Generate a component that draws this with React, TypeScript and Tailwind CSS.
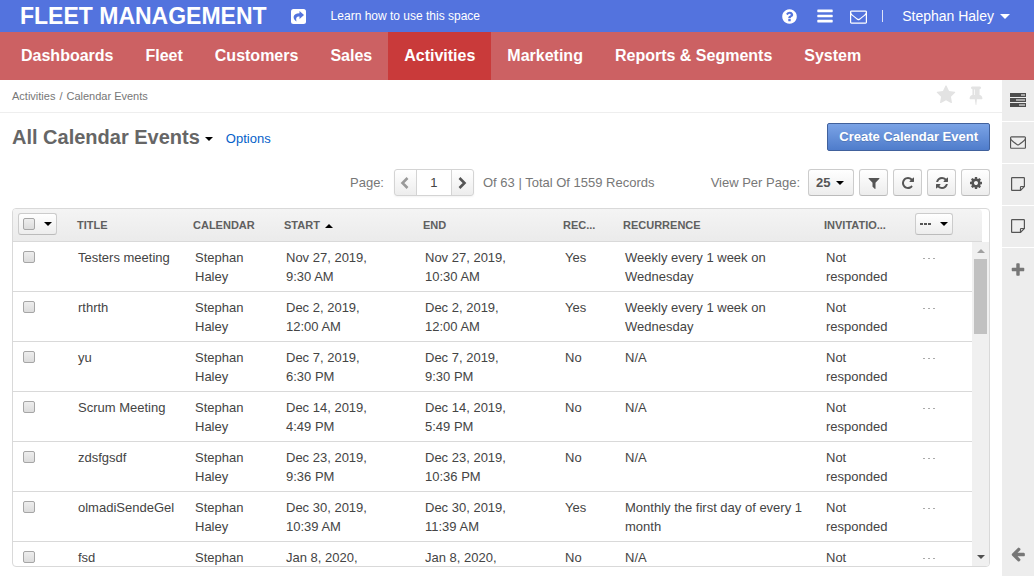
import React from "react";

const ICONS = {
  question:
    "M1024 1376v-192q0-14-9-23t-23-9h-192q-14 0-23 9t-9 23v192q0 14 9 23t23 9h192q14 0 23-9t9-23zm256-672q0-88-55.500-163t-138.500-116-170-41q-243 0-371 213-15 24 8 42l132 100q7 6 19 6 16 0 25-12 53-68 86-92 34-24 86-24 48 0 85.500 26t37.500 59q0 38-20 61t-68 45q-63 28-115.500 86.500t-52.500 125.500v36q0 14 9 23t23 9h192q14 0 23-9t9-23q0-19 21.500-49.500t54.500-49.500q32-18 49-28.500t46-35 44.500-48 28-60.500 12.500-81zm384 192q0 209-103 385.500t-279.500 279.500-385.500 103-385.500-103-279.500-279.500-103-385.500 103-385.500 279.500-279.500 385.500-103 385.500 103 279.500 279.500 103 385.500z",
  bars: "M1664 1344v128q0 26-19 45t-45 19h-1408q-26 0-45-19t-19-45v-128q0-26 19-45t45-19h1408q26 0 45 19t19 45zm0-512v128q0 26-19 45t-45 19h-1408q-26 0-45-19t-19-45v-128q0-26 19-45t45-19h1408q26 0 45 19t19 45zm0-512v128q0 26-19 45t-45 19h-1408q-26 0-45-19t-19-45v-128q0-26 19-45t45-19h1408q26 0 45 19t19 45z",
  envelope:
    "M1664 1504v-768q-32 36-69 66-268 206-426 338-51 43-83 67t-86.500 48.500-102.500 24.500h-2q-48 0-102.500-24.500t-86.500-48.500-83-67q-158-132-426-338-37-30-69-66v768q0 13 9.500 22.500t22.500 9.500h1472q13 0 22.500-9.500t9.500-22.500zm0-1051v-24.500l-.5-13-3-12.500-5.500-9-9-7.500-14-2.500h-1472q-13 0-22.500 9.500t-9.500 22.500q0 168 147 284 193 152 401 317 6 5 35 29.500t46 37.500 44.500 31.500 50.500 27.500 43 9h2q20 0 43-9t50.500-27.500 44.500-31.500 46-37.500 35-29.500q208-165 401-317 54-43 100.500-115.500t46.500-131.500zm128-37v1088q0 66-47 113t-113 47h-1472q-66 0-113-47t-47-113v-1088q0-66 47-113t113-47h1472q66 0 113 47t47 113z",
  star: "M1728 647q0 22-26 48l-363 354 86 500q1 7 1 20 0 21-10.500 35.500t-30.500 14.500q-19 0-40-12l-449-236-449 236q-22 12-40 12-21 0-31.500-14.500t-10.500-35.500q0-6 2-20l86-500-364-354q-25-27-25-48 0-37 56-46l502-73 225-455q19-41 49-41t49 41l225 455 502 73q56 9 56 46z",
  pin: "M800 864v-448q0-14-9-23t-23-9-23 9-9 23v448q0 14 9 23t23 9 23-9 9-23zm672 352q0 26-19 45t-45 19h-429l-51 483q-2 12-10.500 20.500t-20.500 8.500h-1q-27 0-32-27l-76-485h-404q-26 0-45-19t-19-45q0-123 78.500-221.500t177.500-98.500v-512q-52 0-90-38t-38-90 38-90 90-38h640q52 0 90 38t38 90-38 90-90 38v512q99 0 177.500 98.500t78.500 221.500z",
  filter:
    "M1595 295q17 41-14 70l-493 493v742q0 42-39 59-13 5-25 5-27 0-45-19l-256-256q-19-19-19-45v-486l-493-493q-31-29-14-70 17-39 59-39h1280q42 0 59 39z",
  repeat:
    "M1664 256v448q0 26-19 45t-45 19h-448q-42 0-59-40-17-39 14-69l138-138q-148-137-349-137-104 0-198.500 40.500t-163.500 109.500-109.500 163.500-40.500 198.500 40.500 198.500 109.500 163.500 163.500 109.500 198.500 40.500q119 0 225-52t179-147q7-10 23-12 15 0 25 9l137 138q9 8 9.500 20.500t-7.500 22.500q-109 132-264 204.500t-327 72.500q-156 0-298-61t-245-164-164-245-61-298 61-298 164-245 245-164 298-61q147 0 284.500 55.500t244.500 156.500l130-129q29-31 70-14 39 17 39 59z",
  refresh:
    "M1639 1056q0 5-1 7-64 268-268 434.500t-478 166.500q-146 0-282.500-55t-243.500-157l-129 129q-19 19-45 19t-45-19-19-45v-448q0-26 19-45t45-19h448q26 0 45 19t19 45-19 45l-137 137q71 66 161 102t187 36q134 0 250-65t186-179q11-17 53-117 8-23 30-23h192q13 0 22.500 9.500t9.500 22.500zm25-800v448q0 26-19 45t-45 19h-448q-26 0-45-19t-19-45 19-45l138-138q-148-137-349-137-134 0-250 65t-186 179q-11 17-53 117-8 23-30 23h-199q-13 0-22.500-9.500t-9.500-22.500v-7q65-268 270-434.500t480-166.500q146 0 284 55.500t245 156.500l130-129q19-19 45-19t45 19 19 45z",
  cog: "M1152 896q0-106-75-181t-181-75-181 75-75 181 75 181 181 75 181-75 75-181zm512-109v222q0 12-8 23t-20 13l-185 28q-19 54-39 91 35 50 107 138 10 12 10 25t-9 23q-27 37-99 108t-94 71q-12 0-26-9l-138-108q-44 23-91 38-16 136-29 186-7 28-36 28h-222q-14 0-24.500-8.500t-11.500-21.500l-28-184q-49-16-90-37l-141 107q-10 9-25 9-14 0-25-11-126-114-165-168-7-10-7-23 0-12 8-23 15-21 51-66.500t54-70.500q-27-50-41-99l-183-27q-13-2-21-12.500t-8-23.500v-222q0-12 8-23t19-13l186-28q14-46 39-92-40-57-107-138-10-12-10-24 0-10 9-23 26-36 98.500-107.500t94.500-71.500q13 0 26 10l138 107q44-23 91-38 16-136 29-186 7-28 36-28h222q14 0 24.500 8.500t11.500 21.500l28 184q49 16 90 37l142-107q9-9 24-9 13 0 25 10 129 119 165 170 7 8 7 22 0 12-8 23-15 21-51 66.500t-54 70.500q26 50 41 98l183 28q13 2 21 12.500t8 23.500z",
  plus: "M1600 736v192q0 40-28 68t-68 28h-416v416q0 40-28 68t-68 28h-192q-40 0-68-28t-28-68v-416h-416q-40 0-68-28t-28-68v-192q0-40 28-68t68-28h416v-416q0-40 28-68t68-28h192q40 0 68 28t28 68v416h416q40 0 68 28t28 68z",
  arrowLeft:
    "M1664 896v128q0 53-32.500 90.500t-84.500 37.500h-704l293 294q38 36 38 90t-38 90l-75 76q-37 37-90 37-52 0-91-37l-651-652q-37-37-37-90 0-52 37-91l651-650q38-38 91-38 52 0 90 38l75 74q38 38 38 91t-38 91l-293 293h704q52 0 84.500 37.500t32.500 90.500z",
};

function Icon({ name, className }: { name: keyof typeof ICONS; className: string }) {
  return (
    <svg viewBox="0 0 1792 1792" className={className} fill="currentColor" aria-hidden="true">
      <path d={ICONS[name]} />
    </svg>
  );
}

function Caret({ className = "w-2", up = false }: { className?: string; up?: boolean }) {
  return (
    <svg viewBox="0 0 8 4" className={className} fill="currentColor" aria-hidden="true">
      <path d={up ? "M0 4h8L4 0z" : "M0 0h8L4 4z"} />
    </svg>
  );
}

function Chevron({ left = false }: { left?: boolean }) {
  return (
    <svg viewBox="0 0 10 12" className="h-3 w-[10px]" fill="none" stroke="currentColor" strokeWidth="2.600" aria-hidden="true">
      <path d={left ? "M7.500 1 2.500 6l5 5" : "M2.500 1l5 5-5 5"} />
    </svg>
  );
}

function ShareIcon() {
  return (
    <svg viewBox="0 0 15 15" className="size-[15px]" aria-hidden="true">
      <rect width="15" height="15" rx="2.500" fill="#fff" />
      <path d="M8.500 2 13 6 8.500 10V7.600C5.800 7.500 4.500 8.800 5.600 12.600 1.300 10.500 1.200 4.300 8.500 4.300z" fill="#5373de" />
    </svg>
  );
}

function TasksIcon() {
  return (
    <svg viewBox="0 0 16 14" className="h-[14px] w-4" aria-hidden="true">
      <path d="M0 0h16v4H0zM0 5h16v4H0zM0 10h16v4H0z" fill="#4d4d4d" />
      <path d="M11 1.500h4v1h-4zM6 6.500h9v1H6zM9 11.500h6v1H9z" fill="#fff" />
    </svg>
  );
}

function NoteIcon() {
  return (
    <svg viewBox="0 0 14 14" className="size-[14px]" fill="none" stroke="#555" strokeWidth="1.200" aria-hidden="true">
      <path d="M1.300.6h11.400q.7 0 .7.700v8.200l-3.900 3.900H1.300q-.7 0-.7-.7V1.300q0-.7.7-.7z" />
      <path d="M13.400 9.500h-3.200q-.7 0-.7.700v3.200" />
    </svg>
  );
}

const NAV = ["Dashboards", "Fleet", "Customers", "Sales", "Activities", "Marketing", "Reports & Segments", "System"];

type Row = { title: string; start: string; end: string; recurrent: string; recurrence: string };

const ROWS: Row[] = [
  { title: "Testers meeting", start: "Nov 27, 2019, 9:30 AM", end: "Nov 27, 2019, 10:30 AM", recurrent: "Yes", recurrence: "Weekly every 1 week on Wednesday" },
  { title: "rthrth", start: "Dec 2, 2019, 12:00 AM", end: "Dec 2, 2019, 12:00 AM", recurrent: "Yes", recurrence: "Weekly every 1 week on Wednesday" },
  { title: "yu", start: "Dec 7, 2019, 6:30 PM", end: "Dec 7, 2019, 9:30 PM", recurrent: "No", recurrence: "N/A" },
  { title: "Scrum Meeting", start: "Dec 14, 2019, 4:49 PM", end: "Dec 14, 2019, 5:49 PM", recurrent: "No", recurrence: "N/A" },
  { title: "zdsfgsdf", start: "Dec 23, 2019, 9:36 PM", end: "Dec 23, 2019, 10:36 PM", recurrent: "No", recurrence: "N/A" },
  { title: "olmadiSendeGel", start: "Dec 30, 2019, 10:39 AM", end: "Dec 30, 2019, 11:39 AM", recurrent: "Yes", recurrence: "Monthly the first day of every 1 month" },
  { title: "fsd", start: "Jan 8, 2020, 10:00 AM", end: "Jan 8, 2020, 11:00 AM", recurrent: "No", recurrence: "N/A" },
];

const COLS =
  "grid grid-cols-[59px_minmax(0,116fr)_minmax(0,91fr)_minmax(0,139fr)_minmax(0,140fr)_minmax(0,60fr)_minmax(0,201fr)_minmax(0,90fr)_63px]";
const BUTTON = "rounded-[3px] border border-[#ccc] border-b-[#bbb] bg-linear-to-b from-white to-[#ededed] text-[#555]";
const CHECKBOX =
  "block size-3 appearance-none rounded-[2px] border border-[#a6a6a6] bg-linear-to-b from-[#eee] to-[#dcdcdc] checked:bg-[#555]";
const HEAD = "truncate pl-[5px] text-left font-bold";
const CELL = "pl-[7px] pr-2";

function TopBar() {
  return (
    <header className="flex h-8 shrink-0 items-center bg-[#5373de] pr-6 pl-5 text-white">
      <div className="text-[23px] leading-8 font-bold">FLEET MANAGEMENT</div>
      <a href="#share" aria-label="Share" className="ml-6">
        <ShareIcon />
      </a>
      <a href="#learn" className="ml-[25px] text-xs">Learn how to use this space</a>
      <div className="ml-auto flex items-center">
        <a href="#help" aria-label="Help"><Icon name="question" className="size-[17px]" /></a>
        <button aria-label="Menu" className="ml-[18px]"><Icon name="bars" className="size-[18px]" /></button>
        <a href="#mail" aria-label="Emails" className="ml-4"><Icon name="envelope" className="size-[17px]" /></a>
        <span className="ml-[15px] h-3 w-px bg-white/80" />
        <button className="ml-[19px] flex items-center gap-[6px] text-sm">
          Stephan Haley
          <Caret className="w-[10px]" />
        </button>
      </div>
    </header>
  );
}

function MainNav() {
  return (
    <nav className="flex h-12 shrink-0 bg-[#cc6163] pl-[5px]">
      {NAV.map((item) => (
        <a
          key={item}
          href={"#" + item}
          className={
            "flex items-center px-4 text-base font-bold text-white " + (item === "Activities" ? "bg-[#c93a3a]" : "")
          }
        >
          {item}
        </a>
      ))}
    </nav>
  );
}

function Toolbar() {
  return (
    <div className="mt-[18px] flex h-[27px] items-center pr-3 pl-[350px] text-[13px] text-[#777]">
      <label htmlFor="page">Page:</label>
      <div className="ml-[10px] flex h-[27px] shrink-0 rounded-[3px] border border-[#d4d4d4] bg-linear-to-b from-white to-[#ededed] shadow-xs">
        <button aria-label="Previous page" className="flex w-[21px] items-center justify-center text-[#999]"><Chevron left /></button>
        <input id="page" defaultValue="1" className="w-9 border-x border-[#d4d4d4] bg-white text-center text-[#444]" />
        <button aria-label="Next page" className="flex w-[21px] items-center justify-center text-[#555]"><Chevron /></button>
      </div>
      <span className="ml-[9px] whitespace-nowrap">Of 63 | Total Of 1559 Records</span>
      <label htmlFor="per-page" className="ml-auto whitespace-nowrap">View Per Page:</label>
      <div className="relative ml-2">
        <select id="per-page" className={"block h-[27px] w-[46px] appearance-none pl-[7px] font-bold " + BUTTON}>
          <option>25</option>
          <option>50</option>
        </select>
        <Caret className="pointer-events-none absolute top-3 right-[10px] w-2 text-black" />
      </div>
      <div className="ml-[5px] flex gap-[5px]">
        {([["filter", "Filter"], ["repeat", "Refresh"], ["refresh", "Reset"], ["cog", "Grid settings"]] as const).map(([icon, label]) => (
          <button key={icon} aria-label={label} className={"flex h-[27px] w-[29px] items-center justify-center " + BUTTON}>
            <Icon name={icon} className="size-[14px]" />
          </button>
        ))}
      </div>
    </div>
  );
}

function EventsGrid() {
  return (
    <div className="relative mx-3 mt-3 mb-[9px] flex min-h-0 flex-1 flex-col overflow-hidden rounded-[4px] border border-[#d9d9d9]">
      <table className="flex min-h-0 flex-1 flex-col text-[13px] leading-[19px] text-[#444]">
        <thead className="mr-[7px] block h-[33px] shrink-0 rounded-tr-[4px] border-b border-[#d9d9d9] bg-linear-to-b from-[#f4f4f4] to-[#ebebeb]">
          <tr className={COLS + " mr-[10px] h-8 items-center pt-px text-[11px] text-[#606060]"}>
            <th className="pb-[3px] pl-[5px]">
              <div className={"flex h-[22px] w-[39px] items-center justify-between pr-1 pl-1 " + BUTTON}>
                <input type="checkbox" aria-label="Select all" className={CHECKBOX} />
                <button aria-label="Selection options" className="text-black"><Caret /></button>
              </div>
            </th>
            <th className={HEAD}>TITLE</th>
            <th className={HEAD}>CALENDAR</th>
            <th className={HEAD}>
              <button className="flex items-center gap-[5px]">START <Caret up className="w-2 text-black" /></button>
            </th>
            <th className={HEAD}>END</th>
            <th className={HEAD}>REC...</th>
            <th className={HEAD}>RECURRENCE</th>
            <th className={HEAD}>INVITATIO...</th>
            <th className="pb-[3px] pl-[6px]">
              <button aria-label="Mass actions" className={"flex h-[22px] w-[38px] items-center justify-between px-1 " + BUTTON}>
                <svg viewBox="0 0 11 2" className="w-[11px]" fill="currentColor" aria-hidden="true">
                  <path d="M0 0h3v2H0zM4 0h3v2H4zM8 0h3v2H8z" />
                </svg>
                <Caret className="w-2 text-black" />
              </button>
            </th>
          </tr>
        </thead>
        <tbody className="mr-[17px] block min-h-0 flex-1 overflow-y-auto [scrollbar-width:none]">
          {ROWS.map((row) => (
            <tr key={row.title} className={COLS + " h-[50px] border-b border-[#d9d9d9] pt-[6px]"}>
              <td className="pt-[3px] pl-[10px]">
                <input type="checkbox" aria-label={"Select " + row.title} className={CHECKBOX} />
              </td>
              <td className="pl-[6px]">{row.title}</td>
              <td className={CELL}>Stephan Haley</td>
              <td className={CELL + " max-w-[110px]"}>{row.start}</td>
              <td className={CELL + " max-w-[110px]"}>{row.end}</td>
              <td className={CELL}>{row.recurrent}</td>
              <td className={CELL}>{row.recurrence}</td>
              <td className={CELL}>Not responded</td>
              <td className="pl-[14px]">
                <button aria-label="Row actions" className="block pt-[10px]">
                  <svg viewBox="0 0 12 1" className="w-3" fill="#aaa" aria-hidden="true">
                    <path d="M0 0h2v1H0zM5 0h2v1H5zM10 0h2v1h-2z" />
                  </svg>
                </button>
              </td>
            </tr>
          ))}
        </tbody>
      </table>
      <div aria-hidden="true" className="absolute top-[33px] right-0 bottom-0 flex w-[17px] flex-col items-center bg-[#f0f0f0]">
        <Caret up className="mt-[7px] w-2 text-[#a0a0a0]" />
        <div className="mt-[6px] h-[75px] w-[13px] bg-[#c1c1c1]" />
        <Caret className="mt-auto mb-[7px] w-2 text-[#505050]" />
      </div>
    </div>
  );
}

function Sidebar() {
  const item = "flex h-[42px] items-center justify-center border-b border-white pb-px";
  return (
    <aside className="flex w-8 shrink-0 flex-col bg-[#ededed] text-[#555]">
      <button aria-label="Tasks" className={item}><TasksIcon /></button>
      <button aria-label="Emails" className={item}><Icon name="envelope" className="size-4" /></button>
      <button aria-label="Note" className={item}><NoteIcon /></button>
      <button aria-label="Note" className={item}><NoteIcon /></button>
      <button aria-label="Add widget" className="flex h-11 items-center justify-center text-[#777]">
        <Icon name="plus" className="size-4" />
      </button>
      <button aria-label="Collapse" className="mt-auto flex h-11 items-center justify-center text-[#777]">
        <Icon name="arrowLeft" className="size-4" />
      </button>
    </aside>
  );
}

export default function App() {
  return (
    <div className="flex h-screen flex-col bg-white font-['Liberation_Sans',Arial,sans-serif]">
      <TopBar />
      <MainNav />
      <div className="flex min-h-0 flex-1">
        <main className="flex min-w-0 flex-1 flex-col">
          <div className="flex h-[33px] shrink-0 items-center border-b border-[#eee] px-3 text-[11px] text-[#777]">
            <a href="#activities">Activities</a>
            <span className="mx-1">/</span>
            <span>Calendar Events</span>
            <div className="ml-auto flex items-center gap-[10px] pr-1 pb-[3px] text-[#e3e3e3]">
              <button aria-label="Favorite"><Icon name="star" className="size-5" /></button>
              <button aria-label="Pin"><Icon name="pin" className="size-5" /></button>
            </div>
          </div>
          <div className="mt-[10px] flex h-7 shrink-0 items-center px-3">
            <h1 className="text-xl font-bold text-[#666]">All Calendar Events</h1>
            <button aria-label="Choose view" className="ml-[5px] pt-1 text-black"><Caret /></button>
            <a href="#options" className="ml-[13px] pt-[3px] text-[13px] text-[#0561c9]">Options</a>
            <button className="ml-auto h-7 rounded-[2px] border border-[#41619c] bg-linear-to-b from-[#7ba3e6] to-[#4f7ccb] px-[11px] text-[13px] font-bold text-white text-shadow-2xs">
              Create Calendar Event
            </button>
          </div>
          <Toolbar />
          <EventsGrid />
        </main>
        <Sidebar />
      </div>
    </div>
  );
}
